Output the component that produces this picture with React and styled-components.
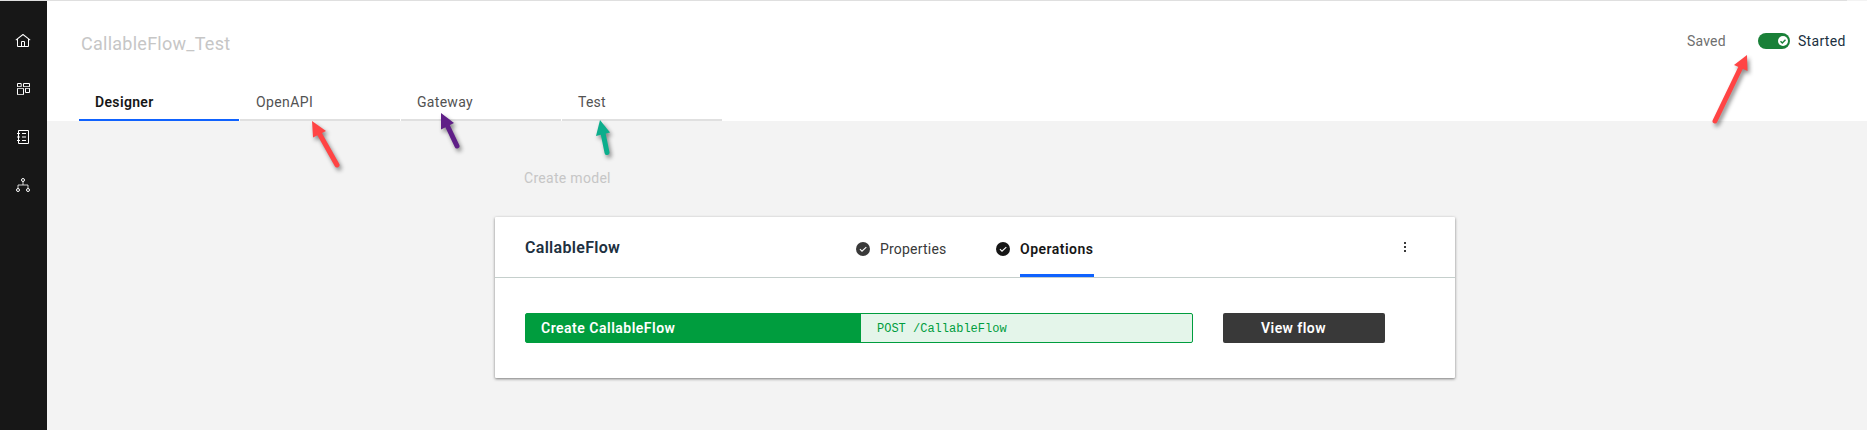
import React from "react";
import styled, { createGlobalStyle } from "styled-components";

const Global = createGlobalStyle`
  * { box-sizing: border-box; }
  body { margin: 0; background: #f3f3f3; font-family: Roboto, "Liberation Sans", sans-serif; font-size: 14px; overflow: hidden; }
  h1, h2 { margin: 0; font-weight: 400; }
  button { font: inherit; border: 0; background: none; padding: 0; letter-spacing: inherit; }
`;

const Page = styled.div`
  position: relative;
  height: 430px;
  display: flex;
  flex-direction: column;
`;
const TopRule = styled.div`
  height: 1px;
  flex: none;
  margin-right: 20px;
  background: #dfdfdf;
`;
const Shell = styled.div`
  flex: 1;
  display: flex;
`;
const Sidebar = styled.nav`
  width: 47px;
  background: #171717;
  padding: 32px 0 0 15px;
  display: flex;
  flex-direction: column;
  gap: 32px;
`;
const NavIcon = styled.svg`
  display: block;
  width: 16px;
  height: 16px;
  fill: #fff;
`;
const Main = styled.div`
  flex: 1;
  display: flex;
  flex-direction: column;
`;
const Header = styled.header`
  height: 120px;
  background: #fff;
  display: flex;
  flex-direction: column;
  justify-content: space-between;
`;
const HeaderTop = styled.div`
  display: flex;
  justify-content: space-between;
  padding: 28px 21px 0 34px;
`;
const Label = styled.span`
  white-space: nowrap;
  letter-spacing: ${(p) => p.$ls || 0}px;
`;
const FlowName = styled.h1`
  font-size: 18px;
  line-height: 30px;
  color: #c6c6c6;
`;
const Status = styled.div`
  display: flex;
  height: 16px;
  margin-top: 4px;
  line-height: 16px;
  color: #20303f;
`;
const Saved = styled.div`
  width: 71px;
  color: #6f6f6f;
`;
const Toggle = styled.svg`
  width: 32px;
  height: 16px;
  margin-right: 8px;
`;
const Started = styled.div`
  width: 48px;
`;
const Tabs = styled.div`
  display: flex;
  gap: 1px;
  padding-left: 32px;
`;
const Tab = styled.button`
  width: 160px;
  height: 40px;
  padding: 4px 0 0 16px;
  text-align: left;
  color: ${(p) => (p.$active ? "#161616" : "#525252")};
  font-weight: ${(p) => (p.$active ? 600 : 400)};
  border-bottom: 2px solid ${(p) => (p.$active ? "#0f62fe" : "#e0e0e0")};
`;
const Canvas = styled.main`
  width: 960px;
  margin-left: 448px;
  padding-top: 47px;
`;
const CreateModel = styled.div`
  height: 49px;
  padding-left: 29px;
  line-height: 20px;
  color: #c6c6c6;
`;
const Card = styled.section`
  height: 161px;
  background: #fff;
  border-radius: 1px;
  box-shadow: 0 1px 3px rgba(0, 0, 0, 0.5);
`;
const CardHeader = styled.div`
  height: 61px;
  display: flex;
  border-bottom: 1px solid #c5cfcc;
  padding-left: 30px;
`;
const ModelName = styled.h2`
  width: 331px;
  padding-top: 20px;
  font-size: 16px;
  line-height: 22px;
  font-weight: 600;
  color: #20303f;
`;
const Step = styled.div`
  display: flex;
  gap: 10px;
  width: ${(p) => p.$width}px;
  color: ${(p) => (p.$active ? "#161616" : "#393939")};
  font-weight: ${(p) => (p.$active ? 600 : 400)};
`;
const StepIcon = styled.svg`
  width: 14px;
  height: 14px;
  margin-top: 25px;
  fill: currentColor;
`;
const StepLabel = styled.div`
  height: 60px;
  padding-top: 22px;
  line-height: 20px;
  width: ${(p) => (p.$active ? "74px" : "auto")};
  border-bottom: ${(p) => (p.$active ? "3px solid #0f62fe" : "0")};
`;
const MenuButton = styled.button`
  margin-top: 25px;
  height: 10px;
  display: flex;
  flex-direction: column;
  gap: 2px;
`;
const Dot = styled.i`
  width: 2px;
  height: 2px;
  background: #393939;
`;
const CardBody = styled.div`
  display: flex;
  gap: 30px;
  padding: 35px 30px;
`;
const Operation = styled.div`
  width: 668px;
  height: 30px;
  display: flex;
  border: 1px solid #009d3e;
  border-radius: 2px;
  background: #e4f5ea;
  line-height: 28px;
`;
const OperationName = styled.div`
  width: 335px;
  background: #009d3e;
  color: #fff;
  font-weight: 600;
  padding-left: 15px;
`;
const Endpoint = styled.code`
  padding: 1px 0 0 16px;
  font: 12px/28px "Liberation Mono", monospace;
  color: #009d3e;
`;
const ViewButton = styled.button`
  width: 162px;
  height: 30px;
  padding-left: 38px;
  text-align: left;
  border-radius: 2px;
  background: #393939;
  color: #fff;
  font-weight: 600;
`;
const Annotations = styled.svg`
  position: absolute;
  inset: 0;
  width: 1867px;
  height: 430px;
  pointer-events: none;
`;
const ArrowShape = styled.g`
  fill: ${(p) => p.$color};
  stroke: ${(p) => p.$color};
  filter: drop-shadow(2px 3px 2px rgba(0, 0, 0, 0.45));
`;

const Arrow = ({ color, head, from, to }) => (
  <ArrowShape $color={color}>
    <polygon points={head} stroke="none" />
    <line x1={from[0]} y1={from[1]} x2={to[0]} y2={to[1]} strokeWidth="5" strokeLinecap="round" />
  </ArrowShape>
);

const Check = () => (
  <StepIcon viewBox="0 0 14 14">
    <circle cx="7" cy="7" r="7" />
    <path d="M3.9 7.2 6 9.2l4.3-4.1" fill="none" stroke="#fff" strokeWidth="1.1" />
  </StepIcon>
);

export default function App() {
  return (
    <Page>
      <Global />
      <TopRule />
      <Shell>
        <Sidebar>
          <NavIcon viewBox="0 0 32 32">
            <path d="M16.6123,2.2138a1.01,1.01,0,0,0-1.2427,0L1,13.4194l1.2427,1.5717L4,13.6208V26a2.0041,2.0041,0,0,0,2,2H26a2.0037,2.0037,0,0,0,2-2V13.63L29.7573,15,31,13.4282ZM18,26H14V18h4Zm2,0V18a2.0023,2.0023,0,0,0-2-2H14a2.002,2.002,0,0,0-2,2v8H6V12.0615l10-7.79,10,7.8005V26Z" />
          </NavIcon>
          <NavIcon viewBox="0 0 16 16">
            <g fill="none" stroke="#fff">
              <path d="M2.5 5.5v-3h3.7v3M8.5 5.5v-3h6v3M2.5 7.8v5.4M8.5 7.8v5.4M10.5 7.5v4h4v-4" />
              <path d="M2 5.5h4.5M8 5.5h7M2 7.5h7M10 7.5h5M2 13.5h7" strokeOpacity=".75" />
            </g>
          </NavIcon>
          <NavIcon viewBox="0 0 32 32">
            <path d="M14 8h8v2h-8zM14 15h8v2h-8zM14 22h8v2h-8z" />
            <path d="M26 2H8a2 2 0 0 0-2 2v4H4v2h2v5H4v2h2v5H4v2h2v4a2 2 0 0 0 2 2h18a2 2 0 0 0 2-2V4a2 2 0 0 0-2-2Zm0 26H8v-4h2v-2H8v-5h2v-2H8v-5h2V8H8V4h18Z" />
          </NavIcon>
          <NavIcon viewBox="0 0 16 16">
            <g fill="none" stroke="#fff">
              <circle cx="8" cy="3" r="1.5" />
              <circle cx="3" cy="13" r="1.5" />
              <circle cx="13" cy="13" r="1.5" />
              <path d="M8 4.5v3.5M3 11.5V8h10v3.5" strokeOpacity=".8" />
            </g>
          </NavIcon>
        </Sidebar>
        <Main>
          <Header>
            <HeaderTop>
              <FlowName><Label $ls={0.26}>CallableFlow_Test</Label></FlowName>
              <Status>
                <Saved><Label $ls={0.2}>Saved</Label></Saved>
                <Toggle viewBox="0 0 32 16">
                  <rect width="32" height="16" rx="8" fill="#198038" />
                  <circle cx="25" cy="8" r="5" fill="#fff" />
                  <path d="M22.5 8.2 24.3 10l3.2-3.3" fill="none" stroke="#198038" strokeWidth="1.4" />
                </Toggle>
                <Started><Label $ls={0.3}>Started</Label></Started>
              </Status>
            </HeaderTop>
            <Tabs>
              <Tab $active><Label $ls={0.35}>Designer</Label></Tab>
              <Tab><Label $ls={0.4}>OpenAPI</Label></Tab>
              <Tab><Label $ls={0.3}>Gateway</Label></Tab>
              <Tab><Label $ls={0.2}>Test</Label></Tab>
            </Tabs>
          </Header>
          <Canvas>
            <CreateModel><Label $ls={0.3}>Create model</Label></CreateModel>
            <Card>
              <CardHeader>
                <ModelName><Label $ls={0.3}>CallableFlow</Label></ModelName>
                <Step $width={140}>
                  <Check />
                  <StepLabel><Label $ls={0.2}>Properties</Label></StepLabel>
                </Step>
                <Step $active $width={408}>
                  <Check />
                  <StepLabel $active><Label $ls={0.48}>Operations</Label></StepLabel>
                </Step>
                <MenuButton aria-label="Menu"><Dot /><Dot /><Dot /></MenuButton>
              </CardHeader>
              <CardBody>
                <Operation>
                  <OperationName><Label $ls={0.5}>Create CallableFlow</Label></OperationName>
                  <Endpoint>POST /CallableFlow</Endpoint>
                </Operation>
                <ViewButton><Label $ls={0.45}>View flow</Label></ViewButton>
              </CardBody>
            </Card>
          </Canvas>
        </Main>
      </Shell>
      <Annotations viewBox="0 0 1867 430">
        <Arrow color="#ff4444" head="312,121 326,131 313,137.5" from={[319, 133]} to={[337, 165]} />
        <Arrow color="#5f1f87" head="441,113 454,123 441,129.5" from={[447.5, 126]} to={[457, 146]} />
        <Arrow color="#0cae8c" head="600,120 610,132.5 596,136" from={[603, 133]} to={[607, 152.5]} />
        <Arrow color="#ff4444" head="1747,55 1747.5,71 1734,65" from={[1741, 67]} to={[1715, 121]} />
      </Annotations>
    </Page>
  );
}
